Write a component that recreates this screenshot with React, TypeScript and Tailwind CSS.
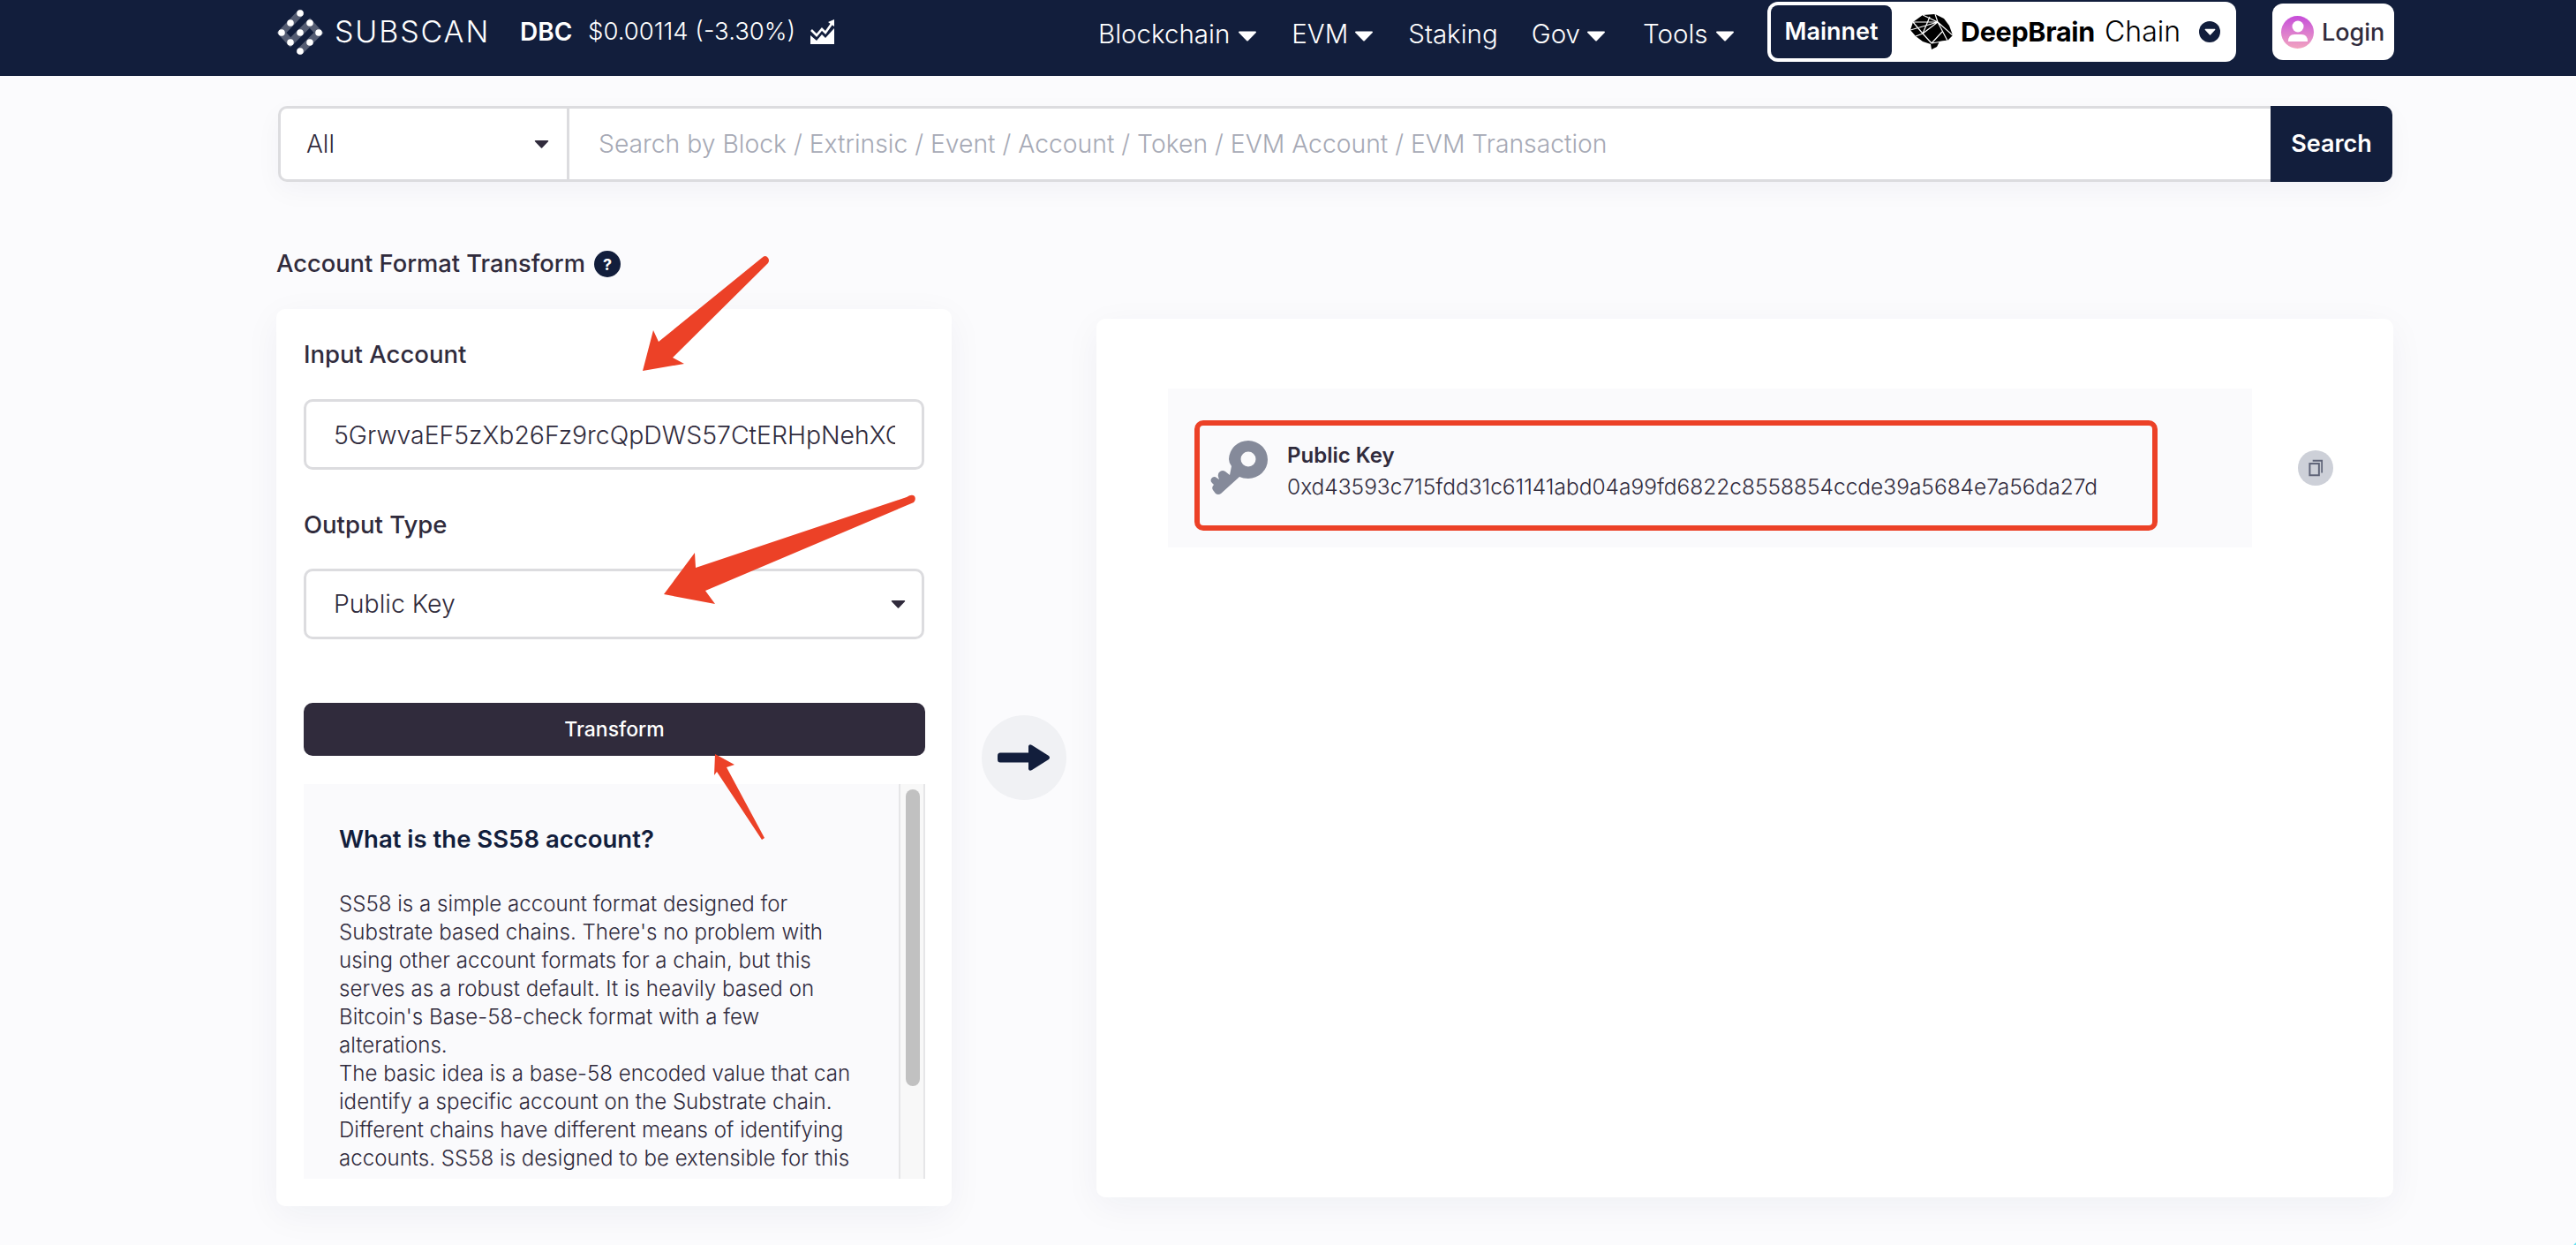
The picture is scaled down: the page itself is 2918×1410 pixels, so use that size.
const FONT = "font-['Inter','Noto_Sans',sans-serif]";

const Caret = ({ className = "" }: { className?: string }) => (
  <svg viewBox="0 0 22 14" preserveAspectRatio="none" className={`shrink-0 ${className}`}>
    <path d="M2 2.5 H20 L11 12.5 Z" fill="currentColor" stroke="currentColor" strokeWidth="2" strokeLinejoin="round" />
  </svg>
);

const NavCaret = ({ ml }: { ml: string }) => <Caret className={`w-[22px] h-[13px] mt-[3px] ${ml}`} />;

const Logo = () => {
  const dots = [[39, 14], [28, 25], [50, 25], [18, 36], [39, 36], [60, 36], [28, 47], [50, 47], [39, 57]];
  return (
    <svg viewBox="0 0 68 70" className="w-[68px] h-[70px] shrink-0">
      <g stroke="#fff" strokeOpacity="0.28" strokeWidth="8" strokeLinecap="round" fill="none">
        <path d="M39 14 L18 36 L28 47 L50 25 L60 36 L39 57" />
      </g>
      {dots.map(([x, y], i) => (
        <circle key={i} cx={x} cy={y} r="3.8" fill="#fff" />
      ))}
    </svg>
  );
};

const ChartIcon = () => (
  <svg viewBox="0 0 28 28" className="w-[28px] h-[28px] ml-[17px] shrink-0">
    <path d="M1 12 L7 18 L13 11 L17 15 L24 5" fill="none" stroke="#fff" strokeWidth="2.6" />
    <path d="M20 3 L27 0 L27 8 Z" fill="#fff" />
    <path d="M0 18 L7 24 L13 17 L17 21 L27 10 V28 H0 Z" fill="#fff" />
  </svg>
);

const Brain = () => (
  <svg viewBox="0 0 48 40" className="w-[48px] h-[40px] shrink-0">
    <path d="M14 1 L28 0 L38 5 L44 13 L48 24 L42 30 L33 31 L30 37 L24 40 L23 34 L14 31 L6 25 L0 18 L3 9 Z" fill="#000" />
    <g stroke="#fff" strokeWidth="1.2" fill="none">
      <path d="M31 9 L14 1 M31 9 L3 9 M31 9 L0 18 M31 9 L14 22 M31 9 L42 30 M31 9 L48 24 M14 22 L24 33 M14 22 L3 9 M14 22 L6 25 M24 33 L42 30 M22 3 L14 22 M31 9 L28 0 M36 20 L24 33" />
    </g>
  </svg>
);

const KeyIcon = () => (
  <svg viewBox="0 0 66 62" className="w-[66px] h-[62px] shrink-0 ml-[12px]">
    <path
      fillRule="evenodd"
      fill="#858a9a"
      d="M43 0 A22 21.5 0 1 1 43 43 Q37 43 33 41 L12 60 Q9 62 6 60 L3 56 Q1 53 4 50 L2 48 Q-1 45 2 42 Q5 40 7 42 L10 44 L9 41 Q8 37 11 35 Q14 33 17 35 L22 39 L24 29 Q21 25 21 21 A22 21.5 0 0 1 43 0 Z M43 12.5 A8.5 8.5 0 1 0 43 29.5 A8.5 8.5 0 1 0 43 12.5 Z"
    />
  </svg>
);

const CopyIcon = () => (
  <svg viewBox="0 0 20 20" className="w-[22px] h-[22px]">
    <path d="M7 2.5 H16.5 V15" fill="none" stroke="#5f6478" strokeWidth="1.6" />
    <rect x="4" y="5.5" width="9.5" height="12" fill="none" stroke="#5f6478" strokeWidth="1.8" />
  </svg>
);

const Arrows = () => (
  <svg viewBox="0 0 2918 1410" className="absolute left-0 top-0 w-[2918px] h-[1410px] pointer-events-none">
    <g fill="#ec4127">
      <path d="M863 292 Q867 288 870 292 Q872 295 870 298 L762 405 L775 412 L728 420 L740 374 L746 387 Z" />
      <path d="M1027 563 Q1033 559 1036 562 Q1038 566 1035 569 L799 669 L810 684 L752 673 L787 626 L788 643 Z" />
      <path d="M810 854 L832 866 L823 869 L866 949 L863 951 L812 874 L809 878 Z" />
    </g>
  </svg>
);

const lines = [
  "SS58 is a simple account format designed for",
  "Substrate based chains. There's no problem with",
  "using other account formats for a chain, but this",
  "serves as a robust default. It is heavily based on",
  "Bitcoin's Base-58-check format with a few",
  "alterations.",
  "The basic idea is a base-58 encoded value that can",
  "identify a specific account on the Substrate chain.",
  "Different chains have different means of identifying",
  "accounts. SS58 is designed to be extensible for this",
];

const navCls = "text-[29.5px] font-light text-white leading-none";

export default function App() {
  return (
    <div className={`relative w-[2918px] h-[1410px] overflow-hidden bg-[#fbfbfd] text-[#302b3c] ${FONT}`}>
      <header className="h-[86px] bg-[#121e3c] flex items-start pl-[301px]">
        <div className="w-[943px] h-[72px] flex items-center">
          <Logo />
          <span className="ml-[10px] w-[175px] text-[34px] font-light tracking-[0.055em] text-white leading-none">SUBSCAN</span>
          <span className="ml-[35px] w-[60px] text-[28px] font-semibold text-white leading-none">DBC</span>
          <span className="ml-[17px] text-[27.5px] font-light text-white leading-none whitespace-nowrap">$0.00114 (-3.30%)</span>
          <ChartIcon />
        </div>
        <nav className="w-[758px] h-[78px] flex items-center text-white">
          <span className={navCls}>Blockchain</span>
          <NavCaret ml="ml-[9px]" />
          <span className={`${navCls} ml-[39px]`}>EVM</span>
          <NavCaret ml="ml-[7px]" />
          <span className={`${navCls} ml-[39px]`}>Staking</span>
          <span className={`${navCls} ml-[38px]`}>Gov</span>
          <NavCaret ml="ml-[7px]" />
          <span className={`${navCls} ml-[42px]`}>Tools</span>
          <NavCaret ml="ml-[8px]" />
        </nav>
        <div className="mt-[2px] w-[531px] h-[68px] bg-white rounded-[12px] flex items-center pl-[4px]">
          <div className="w-[137px] h-[60px] rounded-[8px] bg-[#121e3c] text-white text-[27px] font-semibold flex items-center justify-center">
            Mainnet
          </div>
          <div className="ml-[21px] flex items-center text-black">
            <Brain />
            <span className="ml-[9px] w-[163px] text-[30.5px] font-bold leading-none tracking-[-0.01em]">DeepBrain</span>
            <span className="w-[86px] text-[32px] font-light leading-none">Chain</span>
            <span className="ml-[21px] w-[24px] h-[24px] rounded-full bg-[#121e3c] flex items-center justify-center text-white">
              <Caret className="w-[13px] h-[8px]" />
            </span>
          </div>
        </div>
        <div className="ml-[41px] mt-[4px] w-[138px] h-[64px] bg-white rounded-[12px] flex items-center pl-[10px]">
          <span className="w-[37px] h-[37px] rounded-full bg-gradient-to-b from-[#c64ad9] to-[#f2a3bf] flex items-center justify-center overflow-hidden">
            <svg viewBox="0 0 36 36" className="w-[36px] h-[36px]">
              <circle cx="18" cy="12" r="6.5" fill="#fff" />
              <path d="M7 29 Q7 21 14 21 H22 Q29 21 29 29 Z" fill="#fff" />
            </svg>
          </span>
          <span className="ml-[9px] text-[27px] font-medium leading-none">Login</span>
        </div>
      </header>

      <main className="ml-[313px] w-[2399px]">
        <div className="mt-[34px] ml-[2px] w-[2395px] h-[86px] flex rounded-[10px] border-y-[3px] border-l-[3px] border-[#dcdcdf] bg-white shadow-[0_10px_30px_rgba(20,30,70,0.04)]">
          <div className="w-[327px] border-r-[3px] border-[#dcdcdf] flex items-center justify-between pl-[29px] pr-[20px]">
            <span className="text-[28px] font-light">All</span>
            <Caret className="w-[17px] h-[10px]" />
          </div>
          <div className="flex-1 flex items-center pl-[33px] text-[28.3px] font-light text-[#a6a9b5]">
            Search by Block / Extrinsic / Event / Account / Token / EVM Account / EVM Transaction
          </div>
          <div className="w-[138px] -my-[3px] bg-[#121e3c] rounded-r-[10px] text-white text-[27px] font-semibold flex items-center justify-center">
            Search
          </div>
        </div>

        <div className="mt-[76px] h-[34px] flex items-center">
          <span className="text-[27.3px] font-medium">Account Format Transform</span>
          <span className="ml-[10px] w-[30px] h-[30px] rounded-full bg-[#121e3c] text-white text-[18px] font-bold flex items-center justify-center">?</span>
        </div>

        <div className="mt-[34px] flex items-start">
          <section className="w-[765px] h-[1016px] bg-white rounded-[10px] shadow-[0_10px_40px_rgba(20,30,70,0.05)] px-[31px] overflow-hidden">
            <div className="mt-[34px] h-[36px] flex items-center text-[27.5px] font-medium">Input Account</div>
            <input
              readOnly
              value="5GrwvaEF5zXb26Fz9rcQpDWS57CtERHpNehXCPcNoHGKutQY"
              className="mt-[32px] block w-[703px] h-[80px] pl-[31px] pr-[30px] rounded-[10px] border-[3px] border-[#dcdcdf] bg-white text-[28.4px] font-light text-[#302b3c] outline-none"
            />
            <div className="mt-[45px] h-[36px] flex items-center text-[27.5px] font-medium">Output Type</div>
            <div className="mt-[31px] w-[703px] h-[80px] rounded-[10px] border-[3px] border-[#dcdcdf] flex items-center justify-between pl-[31px] pr-[18px]">
              <span className="text-[28.4px] font-light">Public Key</span>
              <Caret className="w-[17px] h-[10px]" />
            </div>
            <button className="mt-[72px] block w-[704px] h-[60px] rounded-[10px] bg-[#302b3c] text-white text-[23px] font-medium">Transform</button>
            <div className="mt-[32px] w-[704px] h-[447px] bg-[#fafafc] flex overflow-hidden">
              <div className="flex-1 pl-[40px] overflow-hidden">
                <h3 className="mt-[42px] text-[27.5px] leading-[40px] font-semibold text-[#121e3c]">What is the SS58 account?</h3>
                <div className="pt-[38px] text-[24.1px] leading-[32px] font-light">
                  {lines.map((l) => (
                    <div key={l} className="whitespace-nowrap">{l}</div>
                  ))}
                </div>
              </div>
              <div className="w-[30px] bg-[#f8f8f8] border-x-2 border-[#e6e6e8] pt-[6px] pl-[6px]">
                <div className="w-[16px] h-[336px] rounded-full bg-[#c1c1c1]" />
              </div>
            </div>
          </section>

          <div className="w-[164px] h-[1016px] pt-[460px] flex justify-center shrink-0">
            <div className="w-[96px] h-[96px] rounded-full bg-[#f0f1f4] flex items-center justify-center">
              <svg viewBox="0 0 60 32" className="w-[60px] h-[32px]">
                <path d="M3 10.5 H35 V3 Q36 0 39 2 L58 14 Q60 16 58 18 L39 30 Q36 32 35 29 V21.5 H3 Q0 21.5 0 18 V14 Q0 10.5 3 10.5 Z" fill="#121e3c" />
              </svg>
            </div>
          </div>

          <section className="mt-[11px] w-[1469px] h-[995px] bg-white rounded-[10px] shadow-[0_10px_40px_rgba(20,30,70,0.05)] pl-[81px] pt-[79px] flex items-start">
            <div className="w-[1228px] h-[180px] bg-[#fafafc] pl-[30px] pt-[36px]">
              <div className="w-[1091px] h-[125px] rounded-[10px] border-[6px] border-[#ec4127] flex items-start pt-[17px]">
                <KeyIcon />
                <div className="ml-[21px]">
                  <div className="text-[24px] leading-[34px] font-semibold">Public Key</div>
                  <div className="text-[24.5px] leading-[36px] font-light whitespace-nowrap">0xd43593c715fdd31c61141abd04a99fd6822c8558854ccde39a5684e7a56da27d</div>
                </div>
              </div>
            </div>
            <div className="ml-[52px] mt-[70px] w-[40px] h-[40px] rounded-full bg-[#cdd0d8] flex items-center justify-center">
              <CopyIcon />
            </div>
          </section>
        </div>
      </main>

      <Arrows />
      <div className="absolute left-[2900px] top-[1390px] w-[120px] h-[120px] rounded-full bg-[#67e3f3]" />
    </div>
  );
}
